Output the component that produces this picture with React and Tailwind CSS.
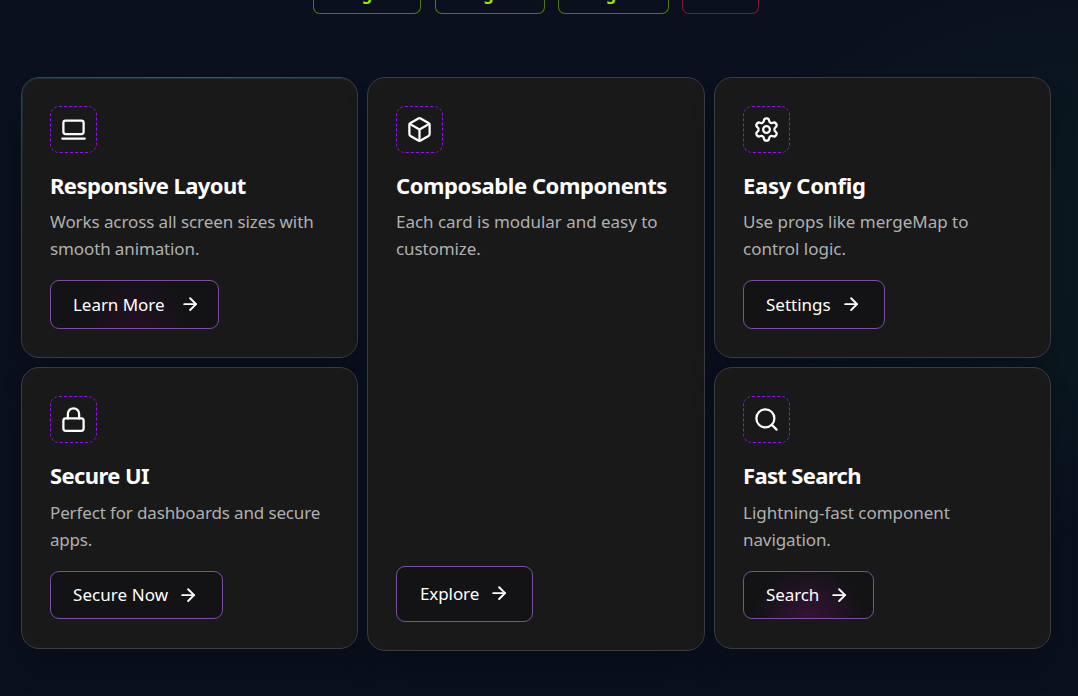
import { LaptopMinimal, Box, Settings, Lock, Search, ArrowRight } from "lucide-react";

const cards = {
  layout: {
    icon: LaptopMinimal,
    title: "Responsive Layout",
    titleClass: "tracking-[-0.56px]",
    textClass: "mt-[7px] mb-[18px]",
    lines: [["Works across all screen sizes with", "tracking-[-0.09px]"], ["smooth animation.", "tracking-[-0.12px]"]],
    action: "Learn More",
    actionClass: "tracking-[-0.05px]",
    buttonClass: "h-[49px] w-[169px] pl-[22px] bg-[radial-gradient(circle_at_50%_100%,#241024_0%,#131315_54px)]",
    arrowClass: "translate-x-[6px]",
    glow: true,
  },
  components: {
    icon: Box,
    title: "Composable Components",
    titleClass: "tracking-[-0.42px]",
    textClass: "mt-[7px] mb-[18px]",
    lines: [["Each card is modular and easy to", "tracking-[-0.03px]"], ["customize.", "tracking-[-0.1px]"]],
    action: "Explore",
    actionClass: "tracking-[-0.1px]",
    buttonClass: "mt-auto h-[56px] w-[137px] pl-[23px] bg-[#131315]",
    arrowClass: "-translate-y-px",
  },
  config: {
    icon: Settings,
    title: "Easy Config",
    titleClass: "tracking-[-0.3px]",
    textClass: "mt-[7px] mb-[18px]",
    lines: [["Use props like mergeMap to", "tracking-[0px]"], ["control logic.", "tracking-[0px]"]],
    action: "Settings",
    actionClass: "tracking-[0px]",
    buttonClass: "h-[49px] w-[142px] pl-[22px] bg-[#131315]",
    arrowClass: "",
  },
  secure: {
    icon: Lock,
    title: "Secure UI",
    titleClass: "tracking-[-0.6px]",
    textClass: "mt-[8px] mb-[18px]",
    lines: [["Perfect for dashboards and secure", "tracking-[-0.14px]"], ["apps.", "tracking-[-0.2px]"]],
    action: "Secure Now",
    actionClass: "tracking-[0.07px]",
    buttonClass: "h-[48px] w-[173px] pl-[22px] bg-[#131315]",
    arrowClass: "",
  },
  search: {
    icon: Search,
    title: "Fast Search",
    titleClass: "tracking-[-0.65px]",
    textClass: "mt-[8px] mb-[18px]",
    lines: [["Lightning-fast component", "tracking-[-0.03px]"], ["navigation.", "tracking-[-0.1px]"]],
    action: "Search",
    actionClass: "tracking-[-0.1px]",
    buttonClass: "h-[48px] w-[131px] pl-[22px] bg-[radial-gradient(circle_at_50%_100%,#351238_0%,#131315_54px)]",
    arrowClass: "",
  },
};

function Card({ card, className }) {
  const Icon = card.icon;
  return (
    <article className={`relative flex flex-col items-start rounded-[18px] border border-[#3b3c42] bg-[#19191a] px-7 pt-7 pb-7 shadow-[0_22px_30px_-8px_rgba(5,10,18,0.45)] ${className}`}>
      {card.glow && (
        <>
          <span className="pointer-events-none absolute inset-x-[14px] top-[-1px] h-[2px] bg-linear-to-r from-[#1f6f74]/20 via-[#1f6f74]/80 to-[#1f6f74]/20" />
          <span className="pointer-events-none absolute inset-0 rounded-[17px] border-t border-l border-[#1c3234] [mask-image:linear-gradient(to_bottom,black,transparent_60%)]" />
        </>
      )}
      <div className="flex size-[47px] shrink-0 items-center justify-center rounded-[9px] border border-dashed border-[#9810fa]">
        <Icon size={27} strokeWidth={2} />
      </div>
      <h2 className={`mt-[17px] h-[31px] text-[22px] leading-[31px] font-bold whitespace-nowrap ${card.titleClass}`}>{card.title}</h2>
      <div className={`text-[17px] leading-[27px] whitespace-nowrap text-[#b0b0b1] ${card.textClass}`}>
        {card.lines.map(([text, cls]) => (
          <p key={text} className={cls}>{text}</p>
        ))}
      </div>
      <button className={`flex shrink-0 items-center gap-[10px] rounded-[9px] border border-[#7c4da3] text-[17px] whitespace-nowrap ${card.buttonClass}`}>
        <span className={card.actionClass}>{card.action}</span>
        <ArrowRight size={20.25} strokeWidth={2.3} className={card.arrowClass} />
      </button>
    </article>
  );
}

const chips = [
  { id: 1, label: "g", cls: "w-[108px] border-[#4f7a0c]" },
  { id: 2, label: "g", cls: "ml-[14px] w-[110px] border-[#4f7a0c] pr-[3px]" },
  { id: 3, label: "g", cls: "ml-[13px] w-[111px] border-[#4f7a0c] pr-[5px]" },
  { id: 4, label: "", cls: "ml-[13px] w-[77px] border-[#7d1d28]" },
];

export default function App() {
  return (
    <main className="flex h-[696px] w-[1078px] flex-col overflow-hidden bg-[#0a101d] bg-[radial-gradient(ellipse_380px_300px_at_1090px_250px,#09191f_0%,#09181f_30%,#0a101d_100%)] font-['Noto_Sans','Open_Sans',sans-serif] text-white">
      <div className="flex h-[77px] shrink-0 items-start pl-[313px] text-[16px] font-bold text-[#9ae600]">
        {chips.map((chip) => (
          <div key={chip.id} className={`flex h-[14px] items-end justify-center rounded-b-[7px] border border-t-0 pb-[12px] leading-[14px] ${chip.cls}`}>
            {chip.label}
          </div>
        ))}
      </div>
      <div className="flex gap-[9px] pl-[21px]">
        <div className="flex flex-col gap-[9px]">
          <Card card={cards.layout} className="h-[281px] w-[337px]" />
          <Card card={cards.secure} className="h-[282px] w-[337px]" />
        </div>
        <Card card={cards.components} className="h-[574px] w-[338px]" />
        <div className="flex flex-col gap-[9px]">
          <Card card={cards.config} className="h-[281px] w-[337px]" />
          <Card card={cards.search} className="h-[282px] w-[337px]" />
        </div>
      </div>
    </main>
  );
}
